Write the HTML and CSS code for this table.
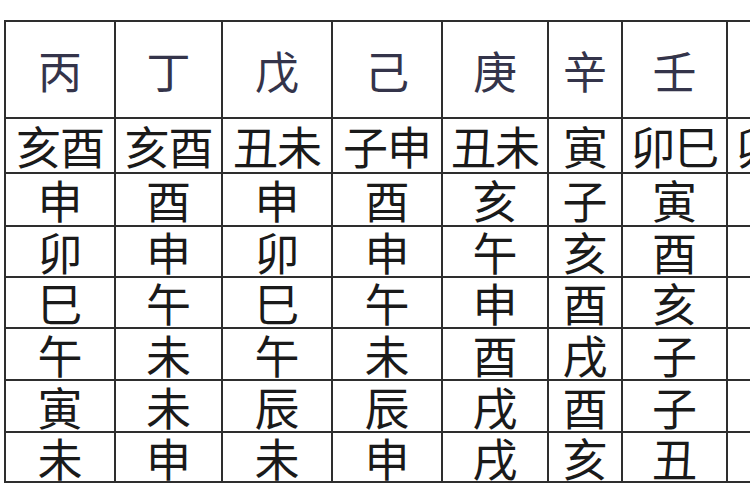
FILE: index.html
```html
<!DOCTYPE html>
<html lang="zh">
<head>
<meta charset="utf-8">
<title>天干表</title>
<link rel="stylesheet" href="styles.css">
</head>
<body>
<table class="grid">
  <colgroup>
    <col class="c1"><col class="c2"><col class="c3"><col class="c4"><col class="c5"><col class="c6"><col class="c7"><col class="c8">
  </colgroup>
  <tr class="r-head">
    <th>丙</th><th>丁</th><th>戊</th><th>己</th><th>庚</th><th>辛</th><th>壬</th><th>癸</th>
  </tr>
  <tr class="r2">
    <td>亥酉</td><td>亥酉</td><td>丑未</td><td>子申</td><td>丑未</td><td>寅</td><td>卯巳</td><td>卯巳</td>
  </tr>
  <tr class="r3">
    <td>申</td><td>酉</td><td>申</td><td>酉</td><td>亥</td><td>子</td><td>寅</td><td>卯</td>
  </tr>
  <tr class="r4">
    <td>卯</td><td>申</td><td>卯</td><td>申</td><td>午</td><td>亥</td><td>酉</td><td>申</td>
  </tr>
  <tr class="r5">
    <td>巳</td><td>午</td><td>巳</td><td>午</td><td>申</td><td>酉</td><td>亥</td><td>子</td>
  </tr>
  <tr class="r6">
    <td>午</td><td>未</td><td>午</td><td>未</td><td>酉</td><td>戌</td><td>子</td><td>亥</td>
  </tr>
  <tr class="r7">
    <td>寅</td><td>未</td><td>辰</td><td>辰</td><td>戌</td><td>酉</td><td>子</td><td>丑</td>
  </tr>
  <tr class="r8">
    <td>未</td><td>申</td><td>未</td><td>申</td><td>戌</td><td>亥</td><td>丑</td><td>寅</td>
  </tr>
</table>
</body>
</html>
```
FILE: styles.css
```css
html, body {
  margin: 0;
  padding: 0;
  background: #ffffff;
  overflow: hidden;
  width: 750px;
  height: 500px;
}

.grid {
  margin: 20px 0 0 4px;
  border-collapse: separate;
  border-spacing: 0;
  table-layout: fixed;
  width: 829px;
  border-top: 2px solid #2e2e2e;
  border-left: 2px solid #2e2e2e;
  font-family: "Noto Sans CJK SC", "Noto Sans CJK JP", sans-serif;
  font-weight: 400;
}

.c1 { width: 110px; }
.c2 { width: 107px; }
.c3 { width: 110px; }
.c4 { width: 110px; }
.c5 { width: 106px; }
.c6 { width: 74px; }
.c7 { width: 105px; }
.c8 { width: 105px; }

.grid th,
.grid td {
  box-sizing: border-box;
  padding: 0;
  border-right: 2px solid #2e2e2e;
  border-bottom: 2px solid #2e2e2e;
  text-align: center;
  vertical-align: middle;
  white-space: nowrap;
  overflow: visible;
  line-height: 1;
  color: #1a1a1a;
}

.grid th {
  font-weight: 400;
  font-size: 44px;
  color: #34344a;
}

.grid td {
  font-size: 45px;
}

.r-head { height: 97px; }
.r2 { height: 55px; }
.r3 { height: 53px; }
.r4 { height: 51px; }
.r5 { height: 51px; }
.r6 { height: 52px; }
.r7 { height: 52px; }
.r8 { height: 50px; }

.r2 td { letter-spacing: -1px; }
```
